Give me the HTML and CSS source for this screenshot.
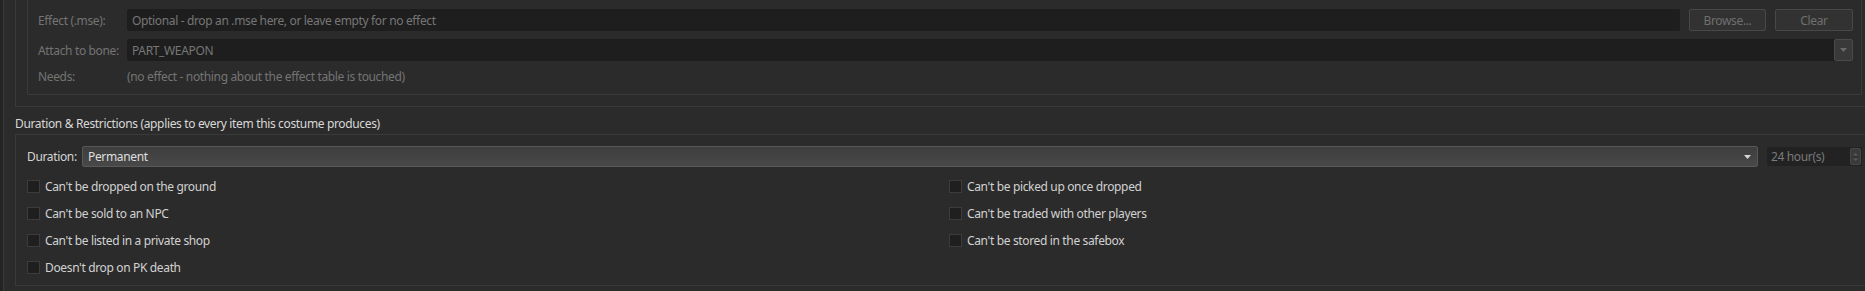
FILE: index.html
```html
<!DOCTYPE html>
<html>
<head>
<meta charset="utf-8">
<link rel="stylesheet" href="styles.css">
</head>
<body>
<div class="page">
  <div class="gutter"></div>
  <div class="scroll">
    <div class="outer-group">
      <div class="inner-group">
        <div class="form-row">
          <span class="lbl">Effect (.mse):</span>
          <div class="field field-effect"><span class="ph">Optional - drop an .mse here, or leave empty for no effect</span></div>
          <div class="btn btn-browse">Browse...</div>
          <div class="btn btn-clear">Clear</div>
        </div>
        <div class="form-row">
          <span class="lbl">Attach to bone:</span>
          <div class="field field-bone">
            <span class="val">PART_WEAPON</span>
            <span class="dd-btn"><svg width="7" height="4" viewBox="0 0 7 4"><path d="M0 0H7L3.5 4Z" fill="#6a6a6a"/></svg></span>
          </div>
        </div>
        <div class="form-row row-needs">
          <span class="lbl">Needs:</span>
          <span class="note">(no effect - nothing about the effect table is touched)</span>
        </div>
      </div>
    </div>
    <div class="section-title">Duration &amp; Restrictions (applies to every item this costume produces)</div>
    <div class="group2">
      <div class="duration-row">
        <span class="dur-lbl">Duration:</span>
        <div class="combo">
          <span class="combo-val">Permanent</span>
          <svg class="combo-arrow" width="7" height="4" viewBox="0 0 7 4"><path d="M0 0H7L3.5 4Z" fill="#d6d6d6"/></svg>
        </div>
        <div class="spin">
          <span class="spin-val">24 hour(s)</span>
          <span class="spin-btn">
            <svg width="7" height="14" viewBox="0 0 7 14"><path d="M1 5.5L3.5 3L6 5.5Z" fill="#5a5a5a"/><path d="M1 8.5L3.5 11L6 8.5Z" fill="#5a5a5a"/><path d="M0.5 7H6.5" stroke="#2c2c2c" stroke-width="1"/></svg>
          </span>
        </div>
      </div>
      <div class="checks">
        <label class="chk"><span class="box"></span><span class="chk-text">Can't be dropped on the ground</span></label>
        <label class="chk"><span class="box"></span><span class="chk-text">Can't be picked up once dropped</span></label>
        <label class="chk"><span class="box"></span><span class="chk-text">Can't be sold to an NPC</span></label>
        <label class="chk"><span class="box"></span><span class="chk-text">Can't be traded with other players</span></label>
        <label class="chk"><span class="box"></span><span class="chk-text">Can't be listed in a private shop</span></label>
        <label class="chk"><span class="box"></span><span class="chk-text">Can't be stored in the safebox</span></label>
        <label class="chk"><span class="box"></span><span class="chk-text">Doesn't drop on PK death</span></label>
      </div>
    </div>
  </div>
</div>
</body>
</html>
```

FILE: styles.css
```css
* { box-sizing: border-box; }

html, body {
  margin: 0;
  padding: 0;
  background: #2b2b2b;
  overflow: hidden;
}

body {
  font-family: "Noto Sans", "Open Sans", sans-serif;
  font-size: 12px;
  letter-spacing: -0.35px;
  color: #d4d4d4;
}

.page {
  display: flex;
  width: 1880px;
  height: 291px;
}

.gutter {
  width: 3px;
  background: #242424;
  flex: none;
}

.scroll {
  flex: 1;
  border-left: 1px solid #3a3a3a;
}

/* upper (disabled) effect section */
.outer-group {
  margin-left: 11px;
  border-left: 1px solid #3a3a3a;
  border-bottom: 1px solid #3a3a3a;
  padding-bottom: 11px;
}

.inner-group {
  margin-left: 11px;
  margin-right: 18px;
  border-left: 1px solid #3a3a3a;
  border-right: 1px solid #3a3a3a;
  border-bottom: 1px solid #3a3a3a;
  padding: 9px 8px 7px 10px;
  display: flex;
  flex-direction: column;
  gap: 8px;
}

.form-row {
  display: flex;
  align-items: center;
  height: 22px;
  gap: 9px;
}

.row-needs {
  margin-top: -4px;
}

.lbl {
  width: 80px;
  flex: none;
  color: #747474;
  white-space: nowrap;
}

.field {
  flex: 1;
  height: 22px;
  background: #1e1e1e;
  border-radius: 2px;
  display: flex;
  align-items: center;
  padding-left: 5px;
  color: #767676;
}

.field-bone .val {
  flex: 1;
}

.dd-btn {
  width: 19px;
  height: 22px;
  background: #393939;
  border: 1px solid #4a4a4a;
  border-radius: 2px;
  display: flex;
  align-items: center;
  justify-content: center;
}

.btn {
  flex: none;
  height: 22px;
  border: 1px solid #484848;
  border-radius: 2px;
  background: #323232;
  color: #6f6f6f;
  display: flex;
  align-items: center;
  justify-content: center;
}

.btn-browse { width: 77px; }
.btn-clear { width: 78px; }

.note {
  color: #747474;
}

/* duration section */
.section-title {
  margin: 9px 0 2px 11px;
  height: 16px;
  line-height: 16px;
  color: #d8d8d8;
}

.group2 {
  margin-left: 11px;
  border-top: 1px solid #3a3a3a;
  border-left: 1px solid #3a3a3a;
  border-bottom: 1px solid #3a3a3a;
  padding: 11px 0 8px 11px;
}

.duration-row {
  display: flex;
  align-items: center;
  height: 21px;
}

.dur-lbl {
  width: 55px;
  flex: none;
  color: #d4d4d4;
}

.combo {
  width: 1676px;
  flex: none;
  height: 21px;
  border: 1px solid #585858;
  border-radius: 2px;
  background: linear-gradient(#3e3e3e, #484848);
  display: flex;
  align-items: center;
  padding: 0 6px 0 5px;
}

.combo-val {
  flex: 1;
  color: #dedede;
}

.spin {
  margin-left: 9px;
  width: 95px;
  flex: none;
  height: 19px;
  background: #222222;
  border-radius: 2px;
  display: flex;
  align-items: center;
  padding-left: 4px;
}

.spin-val {
  flex: 1;
  color: #7a7a7a;
}

.spin-btn {
  width: 11px;
  height: 17px;
  background: #3a3a3a;
  border: 1px solid #474747;
  border-radius: 2px;
  display: flex;
  align-items: center;
  justify-content: center;
  margin-right: 1px;
}

.checks {
  margin-top: 10px;
  display: grid;
  grid-template-columns: 922px 1fr;
  grid-auto-rows: 19px;
  row-gap: 8px;
}

.chk {
  display: flex;
  align-items: center;
  gap: 5px;
  color: #d2d2d2;
}

.box {
  width: 13px;
  height: 13px;
  background: #1f1f1f;
  border: 1px solid #3c3c3c;
  flex: none;
}
```
